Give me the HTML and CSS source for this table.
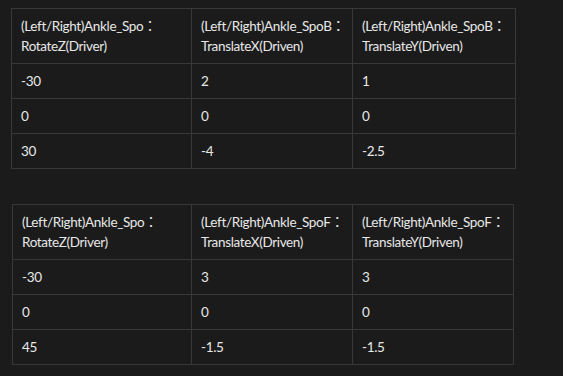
FILE: index.html
```html
<!DOCTYPE html>
<html>
<head>
<meta charset="utf-8">
<link rel="stylesheet" href="styles.css">
</head>
<body>
<table class="grid grid-a">
  <colgroup><col class="c1"><col class="c2"><col class="c3"></colgroup>
  <tr><th>(Left/Right)Ankle_Spo：<br>RotateZ(Driver)</th><th>(Left/Right)Ankle_SpoB：<br>TranslateX(Driven)</th><th>(Left/Right)Ankle_SpoB：<br>TranslateY(Driven)</th></tr>
  <tr><td>-30</td><td>2</td><td>1</td></tr>
  <tr><td>0</td><td>0</td><td>0</td></tr>
  <tr><td>30</td><td>-4</td><td>-2.5</td></tr>
</table>
<table class="grid grid-b">
  <colgroup><col class="c1"><col class="c2"><col class="c3"></colgroup>
  <tr><th>(Left/Right)Ankle_Spo：<br>RotateZ(Driver)</th><th>(Left/Right)Ankle_SpoF：<br>TranslateX(Driven)</th><th>(Left/Right)Ankle_SpoF：<br>TranslateY(Driven)</th></tr>
  <tr><td>-30</td><td>3</td><td>3</td></tr>
  <tr><td>0</td><td>0</td><td>0</td></tr>
  <tr><td>45</td><td>-1.5</td><td>-1.5</td></tr>
</table>
</body>
</html>
```
FILE: styles.css
```css
html, body {
  margin: 0;
  background: #1b1b1b;
}
body {
  padding: 8px 0 0 11px;
  font-family: "Lato", "Noto Sans CJK JP", sans-serif;
  font-size: 13.5px;
  color: #e8e8e8;
}
.grid {
  border-collapse: collapse;
  table-layout: fixed;
}
.grid-a { width: 505px; }
.grid-b { width: 502px; margin: 35px 0 0 1px; }
.grid-a .c1 { width: 180px; }
.grid-a .c2 { width: 161px; }
.grid-b .c1 { width: 179px; }
.grid-b .c2 { width: 161px; }
.grid th, .grid td {
  border: 1px solid #383838;
  padding: 7px 9px;
  line-height: 20px;
  text-align: left;
  font-weight: normal;
  vertical-align: top;
  white-space: nowrap;
  letter-spacing: -0.35px;
}
```
